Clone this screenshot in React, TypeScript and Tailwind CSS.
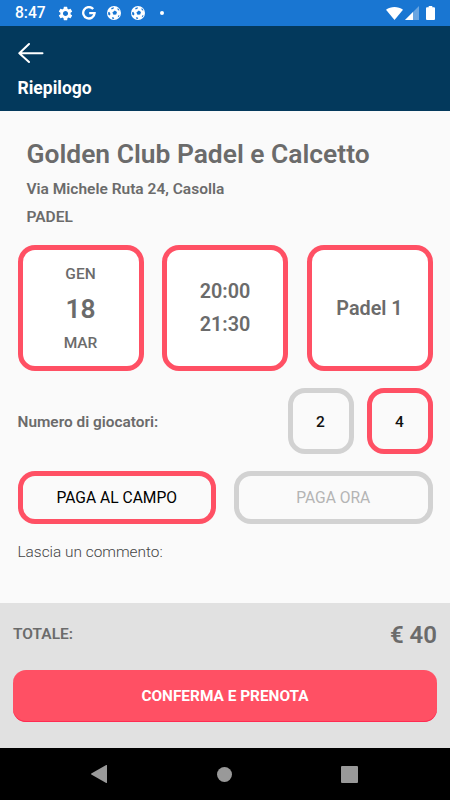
import React, { useState } from "react";
import { MdSettings } from "react-icons/md";
import clsx from "clsx";

const PLAYER_OPTIONS = [2, 4];

const booking = {
  club: "Golden Club Padel e Calcetto",
  address: "Via Michele Ruta 24, Casolla",
  sport: "PADEL",
  month: "GEN",
  day: "18",
  weekday: "MAR",
  start: "20:00",
  end: "21:30",
  court: "Padel 1",
  total: "€ 40",
};

function BallIcon() {
  return (
    <svg viewBox="0 0 14 14" className="w-[14px] h-[14px]">
      <circle cx="7" cy="7" r="7" fill="#fff" />
      <g fill="#1976d2">
        <path d="M7.8 4.6 10 6 9.2 8.6 6.5 8.8 5.4 6.5z" />
        <path d="M4.2 2 7 1.3 6.5 2.7 4.6 3.6z" />
        <path d="M10.8 2 12.6 4.2 11.5 4.4 10.4 3.2z" />
        <path d="M1 6.4 2.3 5.8 3.5 7.9 2.6 9.4 1.3 8.8z" />
        <path d="M4.8 11.2 6.9 11.4 7.2 12.8 5.6 12.9z" />
        <path d="M11 9.8 12.5 8.9 12 10.6 10.8 11.5z" />
      </g>
    </svg>
  );
}

function GoogleIcon() {
  return (
    <svg viewBox="0 0 14 14" className="w-[14px] h-[14px]" fill="none" stroke="#fff" strokeWidth="2.3">
      <path d="M11.2 3A5.7 5.7 0 1 0 12.6 7.1H7.2" />
    </svg>
  );
}

function StatusBar() {
  return (
    <div className="flex h-[26px] items-center justify-between bg-[#1976d2] pl-[15px] pr-[15px] text-white">
      <div className="flex items-center">
        <span className="w-[42px] pt-[2px] text-[15.6px] font-medium leading-none">8:47</span>
        <MdSettings className="w-[17px] h-[17px] mr-[8px]" />
        <GoogleIcon />
        <span className="w-[11px]" />
        <BallIcon />
        <span className="w-[10px]" />
        <BallIcon />
        <span className="ml-[15px] h-1 w-1 rounded-full bg-white" />
      </div>
      <div className="flex items-center">
        <svg viewBox="0 0 17 13" className="w-[17px] h-[13px] mr-[2px]" fill="#fff">
          <path d="M0 2.8C4.8-.9 12.2-.9 17 2.8L8.5 13z" />
        </svg>
        <svg viewBox="0 0 14 14" className="w-[14px] h-[14px] mr-[7px]">
          <path d="M14 0v14H0z" fill="#fff" fillOpacity=".35" />
          <path d="M8 6v8H0z" fill="#fff" />
        </svg>
        <svg viewBox="0 0 9 14" className="w-[9px] h-[14px]" fill="#fff">
          <path d="M2.7 0h3.6v1.3H8a1 1 0 0 1 1 1V13a1 1 0 0 1-1 1H1a1 1 0 0 1-1-1V2.3a1 1 0 0 1 1-1h1.7z" />
        </svg>
      </div>
    </div>
  );
}

function Header() {
  return (
    <header className="h-[85px] bg-[#03395c] pl-[17.5px] pt-[16px] text-white">
      <svg viewBox="0 0 26 22" className="w-[26px] h-[22px]" fill="none" stroke="#fff" strokeWidth="2" strokeLinecap="round" strokeLinejoin="round">
        <path d="M11 2 1.3 11.3 11 20M1.3 11.3H24.5" />
      </svg>
      <h1 className="mt-[14px] text-[17.5px] font-bold leading-[20px]">Riepilogo</h1>
    </header>
  );
}

function Card({ children }: { children: React.ReactNode }) {
  return (
    <div className="flex h-[126px] w-[126px] flex-col items-center justify-center rounded-[17px] border-[5px] border-[#ff5064] bg-white">
      {children}
    </div>
  );
}

function App() {
  const [players, setPlayers] = useState(4);
  const [payNow, setPayNow] = useState(false);

  return (
    <div className="flex h-[800px] w-[450px] flex-col overflow-hidden bg-[#fafafa] font-['Roboto',sans-serif] text-[#6b6b6b]">
      <StatusBar />
      <Header />

      <main className="flex-1 px-[17.5px] pt-[27px]">
        <div className="pl-[9px] whitespace-nowrap">
          <h2 className="text-[26.4px] font-semibold leading-[32px]">{booking.club}</h2>
          <p className="mt-[9px] text-[15.5px] font-semibold leading-[20px]">{booking.address}</p>
          <p className="mt-[8px] text-[15.5px] font-semibold leading-[20px]">{booking.sport}</p>
        </div>

        <div className="mt-[17.5px] flex justify-between">
          <Card>
            <span className="pt-[1px] text-[15.5px] font-medium leading-[20px]">{booking.month}</span>
            <span className="mt-[8px] mb-[7px] text-[26.4px] font-semibold leading-[34px]">{booking.day}</span>
            <span className="text-[15.5px] font-medium leading-[20px]">{booking.weekday}</span>
          </Card>
          <Card>
            <span className="mt-[1px] text-[19.8px] font-semibold leading-[33px]">{booking.start}</span>
            <span className="text-[19.8px] font-semibold leading-[33px]">{booking.end}</span>
          </Card>
          <Card>
            <span className="pt-[2px] text-[19.8px] font-semibold">{booking.court}</span>
          </Card>
        </div>

        <div className="mt-[17.5px] flex items-center justify-between">
          <span className="pt-[3px] text-[15.4px] font-semibold">Numero di giocatori:</span>
          <div className="flex gap-[13px]">
            {PLAYER_OPTIONS.map((n) => (
              <button
                key={n}
                onClick={() => setPlayers(n)}
                className={clsx(
                  "h-[66px] w-[66px] rounded-[17px] border-[5px] pt-[3px] text-[15.5px] font-medium text-[#111]",
                  players === n ? "border-[#ff5064]" : "border-[#d2d2d2]"
                )}
              >
                {n}
              </button>
            ))}
          </div>
        </div>

        <div className="mt-[17px] flex gap-[18px]">
          <button
            onClick={() => setPayNow(false)}
            className={clsx(
              "h-[52.5px] flex-1 rounded-[17px] border-[5px] pt-[2px] text-[15.6px]",
              payNow ? "border-[#d2d2d2] text-[#b4b4b4]" : "border-[#ff5064] text-black"
            )}
          >
            PAGA AL CAMPO
          </button>
          <button
            onClick={() => setPayNow(true)}
            className={clsx(
              "h-[52.5px] flex-1 rounded-[17px] border-[5px] pt-[2px] text-[15.6px]",
              payNow ? "border-[#ff5064] text-black" : "border-[#d2d2d2] text-[#b4b4b4]"
            )}
          >
            PAGA ORA
          </button>
        </div>

        <p className="mt-[18px] text-[15.4px] font-light leading-[20px] text-[#444]">Lascia un commento:</p>
      </main>

      <footer className="h-[145px] bg-[#e1e1e1] px-[13px] pt-[15px]">
        <div className="flex h-[32px] items-center justify-between">
          <span className="pt-[2px] text-[15.5px] font-semibold">TOTALE:</span>
          <span className="pt-[1px] text-[24px] font-semibold">{booking.total}</span>
        </div>
        <button className="mt-[20px] h-[52px] w-full rounded-[13px] bg-[#ff5064] pt-[2px] text-[15.4px] font-bold text-white shadow-[inset_0_-1px_0_#ff2a52]">
          CONFERMA E PRENOTA
        </button>
      </footer>

      <nav className="flex h-[52px] items-center justify-between bg-black pl-[91px] pr-[92px]">
        <svg viewBox="0 0 16 18" className="w-[16px] h-[18px]" fill="#999">
          <path d="M16 .5v17a.5.5 0 0 1-.8.4L.3 9.4a.5.5 0 0 1 0-.8L15.2.1a.5.5 0 0 1 .8.4z" />
        </svg>
        <span className="h-[15px] w-[15px] rounded-full bg-[#999]" />
        <span className="h-[17px] w-[17px] rounded-[1px] bg-[#999]" />
      </nav>
    </div>
  );
}

export default App;
